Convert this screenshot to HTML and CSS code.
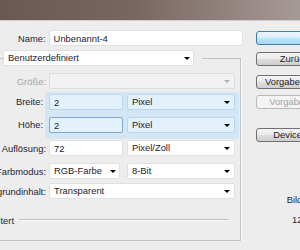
FILE: index.html
```html
<!DOCTYPE html>
<html lang="de">
<head>
    <meta charset="UTF-8">
    <meta name="viewport" content="width=device-width, initial-scale=1.0">
    <title>Neu</title>
    <link rel="stylesheet" href="styles.css">
</head>
<body>

    <div class="titlebar"></div>

    <div class="dialog">
        <div class="main">
            <div class="row">
                <span class="label">Name:</span>
                <input class="field name-field" type="text" value="Unbenannt-4">
            </div>

            <fieldset class="group">
                <legend class="preset">
                    <div class="field select preset-select">Benutzerdefiniert<span class="arrow"></span></div>
                </legend>

                <div class="row disabled">
                    <span class="label">Größe:</span>
                    <div class="field select wide"><span class="arrow"></span></div>
                </div>

                <!-- Breite/Höhe sind verknüpft -->
                <div class="linked">
                    <div class="linked-labels">
                        <span class="label">Breite:</span>
                        <span class="label">Höhe:</span>
                    </div>
                    <div class="link-box">
                        <div class="fields">
                            <input class="field num" type="text" value="2">
                            <div class="field select unit">Pixel<span class="arrow"></span></div>
                        </div>
                        <div class="fields">
                            <input class="field num focus" type="text" value="2">
                            <div class="field select unit">Pixel<span class="arrow"></span></div>
                        </div>
                    </div>
                </div>

                <div class="row res-row">
                    <span class="label">Auflösung:</span>
                    <div class="fields">
                        <input class="field num" type="text" value="72">
                        <div class="field select unit">Pixel/Zoll<span class="arrow"></span></div>
                    </div>
                </div>

                <div class="row mode-row">
                    <span class="label">Farbmodus:</span>
                    <div class="fields mode">
                        <div class="field select mode-select">RGB-Farbe<span class="arrow"></span></div>
                        <div class="field select unit">8-Bit<span class="arrow"></span></div>
                    </div>
                </div>

                <div class="row bg-row">
                    <span class="label">Hintergrundinhalt:</span>
                    <div class="field select wide">Transparent<span class="arrow"></span></div>
                </div>

                <div class="advanced">
                    <span class="adv-title">Erweitert</span>
                    <span class="adv-line"></span>
                </div>
            </fieldset>
        </div>

        <div class="side">
            <button class="btn default">OK</button>
            <button class="btn reset">Zurücksetzen</button>
            <button class="btn save">Vorgabe speichern...</button>
            <button class="btn delete" disabled>Vorgabe löschen...</button>
            <button class="btn device">Device Central...</button>

            <div class="info">
                <p>Bildgröße:</p>
                <p class="info-value">12 Byte</p>
            </div>
        </div>
    </div>

</body>
</html>
```

FILE: styles.css
```css
html, body {
    margin: 0;
    overflow: hidden;
}
body {
    font-family: "Liberation Sans", Arial, sans-serif;
    font-size: 9.4px;
    color: #1c1c32;
    background: #ededed;
}
.titlebar {
    height: 20px;
    background: linear-gradient(to right, #6b5853, #796661 45%, #a69a97);
    border-bottom: 1px solid #d4cfcd;
}
.dialog {
    display: flex;
    margin-left: -70px;
    padding-top: 9px;
}
.main {
    width: 313px;
}
.row {
    display: flex;
    align-items: center;
    height: 16px;
}
.label {
    width: 116px;
    margin-right: 3px;
    text-align: right;
    white-space: nowrap;
}
.field {
    box-sizing: border-box;
    height: 16px;
    margin: 0;
    padding: 0 4px;
    border: 1px solid #e0e0e0;
    border-radius: 2px;
    background: #fff;
    font: inherit;
    color: #1a1a30;
    line-height: 14px;
    white-space: nowrap;
}
input.field {
    outline: none;
}
.name-field {
    width: 195px;
}
.select {
    display: flex;
    align-items: center;
    justify-content: space-between;
}
.arrow {
    width: 0;
    height: 0;
    margin-left: auto;
    border-left: 3px solid transparent;
    border-right: 3px solid transparent;
    border-top: 3px solid #000;
}

/* group box */
.group {
    box-sizing: border-box;
    width: 311px;
    margin: 4px 0 0 0;
    padding: 7px 0 13px 0;
    border: 1px solid #c2c2c2;
    box-shadow: 1px 1px 0 #fafafa;
}
.group .label {
    width: 115px;
}
.preset {
    margin-left: 72px;
    padding: 0 8px 0 0;
}
.preset-select {
    width: 191px;
    padding-right: 3px;
}
.wide {
    width: 186px;
}
.disabled .label {
    color: #a6a6a6;
}
.disabled .field {
    background: #f1f1f1;
    border-color: #dcdcdc;
}
.disabled .arrow {
    border-top-color: #b0b0b0;
}

.fields {
    display: flex;
    gap: 4px;
    height: 16px;
}
.num {
    width: 74px;
}
.unit {
    width: 108px;
}
.mode {
    gap: 7px;
}
.mode-select {
    width: 71px;
    padding-right: 3px;
}

/* verknüpfte Felder */
.linked {
    display: flex;
    margin-top: 3px;
}
.linked-labels {
    display: flex;
    flex-direction: column;
    gap: 7px;
    padding-top: 2px;
}
.linked-labels .label {
    width: 112px;
    margin-right: 2px;
    height: 16px;
    line-height: 16px;
}
.link-box {
    display: flex;
    flex-direction: column;
    gap: 7px;
    width: 194px;
    box-sizing: border-box;
    padding: 2px 4px 6px 4px;
    background: #d2e6f6;
}
.link-box .field {
    background: #e2f1fc;
    border-color: #bcd5ea;
}
.link-box .focus {
    border-color: #7fa8cf;
}

.res-row {
    margin-top: 1px;
}
.mode-row {
    margin-top: 7px;
}
.bg-row {
    margin-top: 4px;
}

.advanced {
    display: flex;
    align-items: center;
    height: 14px;
    margin-top: 14px;
}
.adv-title {
    width: 83px;
    text-align: right;
}
.adv-line {
    flex: 1;
    margin: 0 12px 0 5px;
    border-top: 1px solid #bdbdbd;
    border-bottom: 1px solid #fbfbfb;
}

/* buttons */
.side {
    width: 104px;
    margin-left: 13px;
    padding-top: 1px;
}
.btn {
    display: block;
    box-sizing: border-box;
    width: 104px;
    height: 14px;
    padding: 0;
    border: 1px solid #707070;
    border-radius: 3px;
    background: linear-gradient(#f4f4f4, #ebebeb 50%, #dddddd 51%, #cfcfcf);
    font: inherit;
    color: #1a1a2a;
    line-height: 12px;
    white-space: nowrap;
    text-align: center;
}
.default {
    border-color: #3c7fb1;
    background: linear-gradient(#eaf6fd, #d9f0fc 50%, #bee6fd 51%, #a7d9f5);
}
.reset {
    margin-top: 7px;
}
.save {
    margin-top: 9px;
}
.delete {
    margin-top: 6px;
    border-color: #b5b9bc;
    background: #f4f4f4;
    color: #a3a3a3;
}
.device {
    margin-top: 19px;
}
.info {
    margin-top: 51px;
    text-align: center;
    color: #262634;
}
.info p {
    margin: 0;
    height: 14px;
    line-height: 14px;
}
.info .info-value {
    margin-top: 6px;
}
```
